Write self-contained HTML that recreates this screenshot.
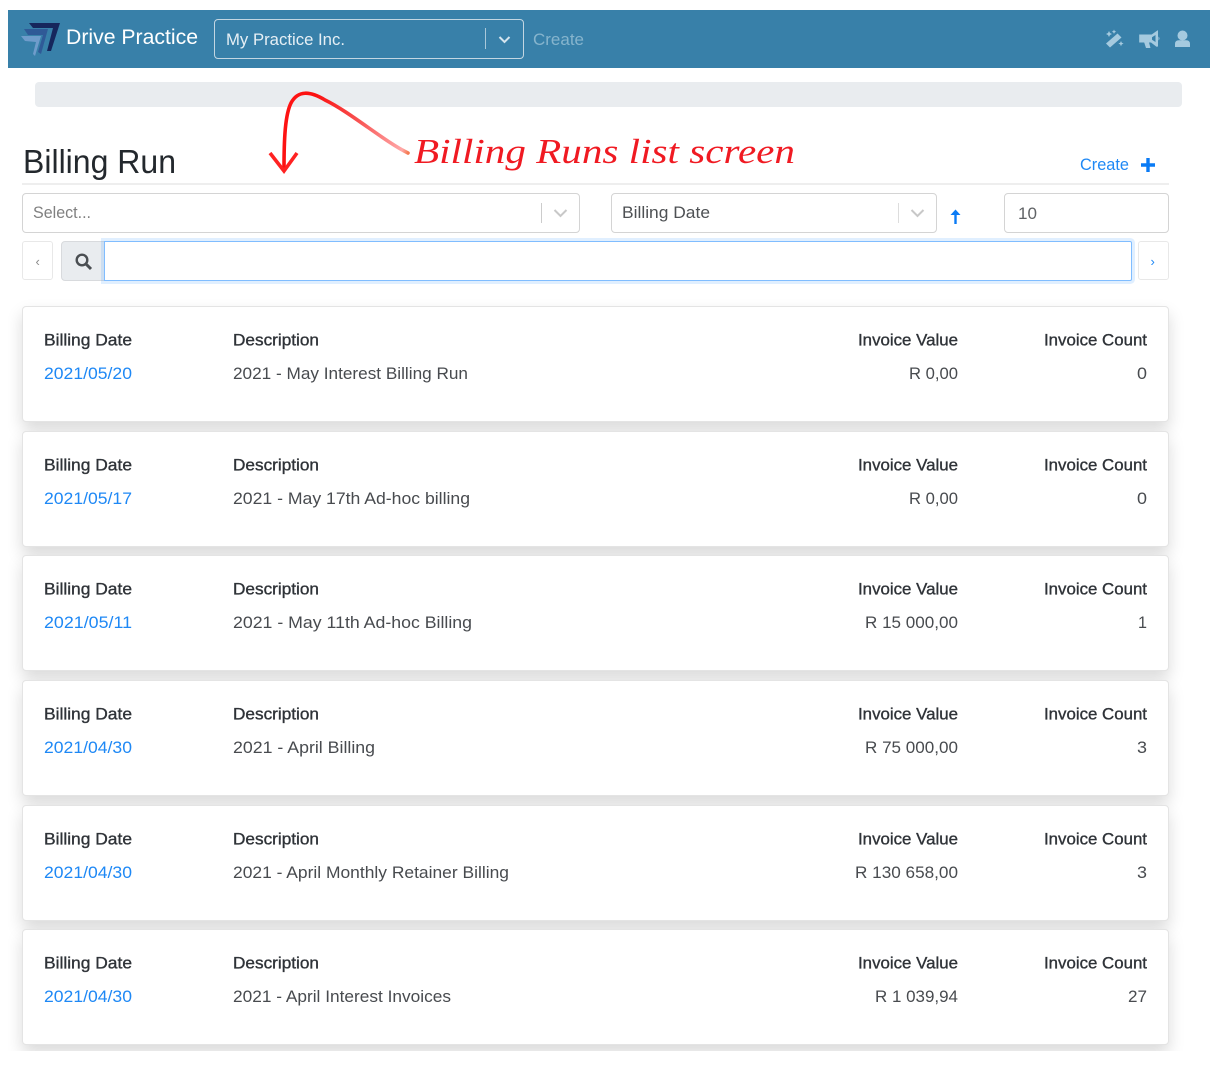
<!DOCTYPE html>
<html><head><meta charset="utf-8"><title>Billing Run</title>
<style>
html,body{margin:0;padding:0;background:#fff;width:1225px;height:1067px;overflow:hidden}
.a{position:absolute;box-sizing:border-box}
#clip{left:8px;top:10px;width:1202px;height:1041px;overflow:hidden}
.card{position:absolute;box-sizing:border-box;left:14px;width:1147px;height:116px;background:#fff;border:1px solid #e4e4e4;border-radius:4px;box-shadow:0 8px 16px rgba(0,0,0,.15)}
.box{background:#fff;border:1px solid #d4d4d4;border-radius:4px}
svg{position:absolute;left:0;top:0}
text{font-family:"Liberation Sans",sans-serif}
.h{font-size:16.5px;fill:#2f3338;stroke:#2f3338;stroke-width:.35px}
.v{font-size:16.5px;fill:#484b4f}
.l{font-size:16.5px;fill:#1e88f5}
</style></head><body>
<div id="clip" class="a">
<div class="a" style="left:0;top:0;width:1202px;height:58px;background:#3880a9"></div>
<div class="a" style="left:206px;top:9px;width:310px;height:40px;border:1px solid #c3d6e2;border-radius:4px"></div>
<div class="a" style="left:477px;top:18px;width:1px;height:21px;background:#a9c8da"></div>
<div class="a" style="left:27px;top:72px;width:1147px;height:25px;background:#e9ecef;border-radius:4px"></div>
<div class="a" style="left:14px;top:173px;width:1147px;height:2px;background:#eeeeee"></div>
<div class="a box" style="left:14px;top:183px;width:558px;height:40px"></div>
<div class="a" style="left:533px;top:193px;width:1px;height:20px;background:#cccccc"></div>
<div class="a box" style="left:603px;top:183px;width:326px;height:40px"></div>
<div class="a" style="left:890px;top:193px;width:1px;height:20px;background:#dddddd"></div>
<div class="a box" style="left:996px;top:183px;width:165px;height:40px"></div>
<div class="a" style="left:14px;top:231px;width:31px;height:39px;border:1px solid #e8e8e8;border-radius:3px"></div>
<div class="a" style="left:53px;top:231px;width:44px;height:40px;background:#e9ecef;border:1px solid #d8dadd;border-radius:4px 0 0 4px"></div>
<div class="a" style="left:96px;top:231px;width:1028px;height:40px;background:#fff;border:1px solid #80bdff;box-shadow:0 0 0 3px rgba(0,123,255,.12);border-radius:0 2px 2px 0"></div>
<div class="a" style="left:1130px;top:231px;width:31px;height:39px;border:1px solid #e8e8e8;border-radius:3px"></div>
<div class="card" style="top:296px"></div>
<div class="card" style="top:421px"></div>
<div class="card" style="top:545px"></div>
<div class="card" style="top:670px"></div>
<div class="card" style="top:795px"></div>
<div class="card" style="top:919px"></div>
</div>
<svg width="1225" height="1067" viewBox="0 0 1225 1067" xmlns="http://www.w3.org/2000/svg">
<defs><linearGradient id="g" gradientUnits="userSpaceOnUse" x1="408" y1="153" x2="283" y2="110">
<stop offset="0" stop-color="#f47a50"/><stop offset=".05" stop-color="#ffa8a8"/><stop offset=".45" stop-color="#f8504f"/><stop offset=".8" stop-color="#fb1010"/><stop offset="1" stop-color="#ff1414"/></linearGradient></defs>

<polygon points="29,23 60,23 51,51 47,51 53,28 33,28" fill="#16265c"/>
<polygon points="24,29 48,29 41,54 38,52 43,35 28,35" fill="#2f5a97"/>
<polygon points="21,36 41,36 35,56 33,54 36,42 25,41" fill="#6f9ccb"/>
<text x="66" y="44" font-size="21.5" fill="#fff" textLength="132" lengthAdjust="spacingAndGlyphs">Drive Practice</text>
<text x="226" y="45" font-size="17" fill="#e6eff5" textLength="119" lengthAdjust="spacingAndGlyphs">My Practice Inc.</text>
<path d="M499.5 37l5 5 5-5" fill="none" stroke="#d5e4ee" stroke-width="2"/>
<text x="533" y="45" font-size="17" fill="#86b4cd" textLength="51" lengthAdjust="spacingAndGlyphs">Create</text>

<g fill="#a5cadf">
<path d="M1117.5 33.5l4 4-11.5 10-4-4z"/>
<path d="M1109 31l1 2 2 1-2 1-1 2-1-2-2-1 2-1zM1114 29.500l.7 1.500 1.500.700-1.500.700-.7 1.500-.7-1.500-1.500-.7 1.500-.7zM1121 41l.8 1.800 1.800.800-1.800.800-.8 1.800-.8-1.800-1.800-.8 1.800-.8z"/>
<path d="M1158 30.500v16l-1.500.3-5.500-4.300h-2l1.500 5.500h-4.500l-1.800-5.500h-5v-8h12.500l6-4.300zM1155.500 35l-3.500 2.300v2.500l3.500 2.200z" fill-rule="evenodd"/>
<path d="M1158.500 36.500q2 2 0 4z"/>
<circle cx="1182.500" cy="35.500" r="5"/>
<path d="M1175 47v-3q0-3.800 3.800-3.800h7.400q3.800 0 3.800 3.800v3z"/>
</g>

<path d="M408 153C385 142 350 112 325 100C310 91 298 90 291 103C285 115 284 140 284 169" fill="none" stroke="url(#g)" stroke-width="3.600" stroke-linecap="round"/>
<path d="M270 153L284 171L297 153" fill="none" stroke="#ff2222" stroke-width="3.600"/>
<text x="414" y="163" font-size="35" fill="#f01a22" style='font-family:"Liberation Serif",serif;font-style:italic' textLength="381" lengthAdjust="spacingAndGlyphs">Billing Runs list screen</text>

<text x="23" y="173" font-size="33" fill="#23282d" textLength="153" lengthAdjust="spacingAndGlyphs">Billing Run</text>
<text x="1080" y="170" font-size="16.500" fill="#1e88f5" textLength="49" lengthAdjust="spacingAndGlyphs">Create</text>
<path d="M1148 158v14M1141 165h14" stroke="#0a7bf5" stroke-width="3.400" fill="none"/>

<text x="33" y="218" font-size="16.500" fill="#808080" textLength="58" lengthAdjust="spacingAndGlyphs">Select...</text>
<path d="M554.500 210l6 6 6-6" fill="none" stroke="#c8c8c8" stroke-width="2"/>
<text x="622" y="218" font-size="16.500" fill="#4e5154" textLength="88" lengthAdjust="spacingAndGlyphs">Billing Date</text>
<path d="M911.500 210l6 6 6-6" fill="none" stroke="#c8c8c8" stroke-width="2"/>
<path d="M955.500 224v-12" stroke="#0a7bf5" stroke-width="2.400" fill="none"/><path d="M950.500 215l5-5.500 5 5.500z" fill="#0a7bf5"/>
<text x="1018" y="219" font-size="16.500" fill="#606366" textLength="19" lengthAdjust="spacingAndGlyphs">10</text>
<text x="35.500" y="266" font-size="13" fill="#8a8a8a">‹</text>
<text x="1150.500" y="266" font-size="13" fill="#1e88f5">›</text>
<circle cx="82" cy="260" r="5.300" fill="none" stroke="#4a4e52" stroke-width="2.400"/>
<path d="M86 264l5 5" stroke="#4a4e52" stroke-width="3" fill="none"/>

<text class="h" x="44" y="345.500" textLength="88" lengthAdjust="spacingAndGlyphs">Billing Date</text>
<text class="h" x="233" y="345.500" textLength="86" lengthAdjust="spacingAndGlyphs">Description</text>
<text class="h" x="858" y="345.500" textLength="100" lengthAdjust="spacingAndGlyphs">Invoice Value</text>
<text class="h" x="1044" y="345.500" textLength="103" lengthAdjust="spacingAndGlyphs">Invoice Count</text>
<text class="l" x="44" y="379" textLength="88" lengthAdjust="spacingAndGlyphs">2021/05/20</text>
<text class="v" x="233" y="379" textLength="235" lengthAdjust="spacingAndGlyphs">2021 - May Interest Billing Run</text>
<text class="v" x="909" y="379" textLength="49" lengthAdjust="spacingAndGlyphs">R 0,00</text>
<text class="v" x="1137" y="379" textLength="10" lengthAdjust="spacingAndGlyphs">0</text>

<text class="h" x="44" y="470.500" textLength="88" lengthAdjust="spacingAndGlyphs">Billing Date</text>
<text class="h" x="233" y="470.500" textLength="86" lengthAdjust="spacingAndGlyphs">Description</text>
<text class="h" x="858" y="470.500" textLength="100" lengthAdjust="spacingAndGlyphs">Invoice Value</text>
<text class="h" x="1044" y="470.500" textLength="103" lengthAdjust="spacingAndGlyphs">Invoice Count</text>
<text class="l" x="44" y="504" textLength="88" lengthAdjust="spacingAndGlyphs">2021/05/17</text>
<text class="v" x="233" y="504" textLength="237" lengthAdjust="spacingAndGlyphs">2021 - May 17th Ad-hoc billing</text>
<text class="v" x="909" y="504" textLength="49" lengthAdjust="spacingAndGlyphs">R 0,00</text>
<text class="v" x="1137" y="504" textLength="10" lengthAdjust="spacingAndGlyphs">0</text>

<text class="h" x="44" y="594.500" textLength="88" lengthAdjust="spacingAndGlyphs">Billing Date</text>
<text class="h" x="233" y="594.500" textLength="86" lengthAdjust="spacingAndGlyphs">Description</text>
<text class="h" x="858" y="594.500" textLength="100" lengthAdjust="spacingAndGlyphs">Invoice Value</text>
<text class="h" x="1044" y="594.500" textLength="103" lengthAdjust="spacingAndGlyphs">Invoice Count</text>
<text class="l" x="44" y="628" textLength="88" lengthAdjust="spacingAndGlyphs">2021/05/11</text>
<text class="v" x="233" y="628" textLength="239" lengthAdjust="spacingAndGlyphs">2021 - May 11th Ad-hoc Billing</text>
<text class="v" x="865" y="628" textLength="93" lengthAdjust="spacingAndGlyphs">R 15 000,00</text>
<text class="v" x="1138" y="628" textLength="9" lengthAdjust="spacingAndGlyphs">1</text>

<text class="h" x="44" y="719.500" textLength="88" lengthAdjust="spacingAndGlyphs">Billing Date</text>
<text class="h" x="233" y="719.500" textLength="86" lengthAdjust="spacingAndGlyphs">Description</text>
<text class="h" x="858" y="719.500" textLength="100" lengthAdjust="spacingAndGlyphs">Invoice Value</text>
<text class="h" x="1044" y="719.500" textLength="103" lengthAdjust="spacingAndGlyphs">Invoice Count</text>
<text class="l" x="44" y="753" textLength="88" lengthAdjust="spacingAndGlyphs">2021/04/30</text>
<text class="v" x="233" y="753" textLength="142" lengthAdjust="spacingAndGlyphs">2021 - April Billing</text>
<text class="v" x="865" y="753" textLength="93" lengthAdjust="spacingAndGlyphs">R 75 000,00</text>
<text class="v" x="1137" y="753" textLength="10" lengthAdjust="spacingAndGlyphs">3</text>

<text class="h" x="44" y="844.500" textLength="88" lengthAdjust="spacingAndGlyphs">Billing Date</text>
<text class="h" x="233" y="844.500" textLength="86" lengthAdjust="spacingAndGlyphs">Description</text>
<text class="h" x="858" y="844.500" textLength="100" lengthAdjust="spacingAndGlyphs">Invoice Value</text>
<text class="h" x="1044" y="844.500" textLength="103" lengthAdjust="spacingAndGlyphs">Invoice Count</text>
<text class="l" x="44" y="878" textLength="88" lengthAdjust="spacingAndGlyphs">2021/04/30</text>
<text class="v" x="233" y="878" textLength="276" lengthAdjust="spacingAndGlyphs">2021 - April Monthly Retainer Billing</text>
<text class="v" x="855" y="878" textLength="103" lengthAdjust="spacingAndGlyphs">R 130 658,00</text>
<text class="v" x="1137" y="878" textLength="10" lengthAdjust="spacingAndGlyphs">3</text>

<text class="h" x="44" y="968.500" textLength="88" lengthAdjust="spacingAndGlyphs">Billing Date</text>
<text class="h" x="233" y="968.500" textLength="86" lengthAdjust="spacingAndGlyphs">Description</text>
<text class="h" x="858" y="968.500" textLength="100" lengthAdjust="spacingAndGlyphs">Invoice Value</text>
<text class="h" x="1044" y="968.500" textLength="103" lengthAdjust="spacingAndGlyphs">Invoice Count</text>
<text class="l" x="44" y="1002" textLength="88" lengthAdjust="spacingAndGlyphs">2021/04/30</text>
<text class="v" x="233" y="1002" textLength="218" lengthAdjust="spacingAndGlyphs">2021 - April Interest Invoices</text>
<text class="v" x="875" y="1002" textLength="83" lengthAdjust="spacingAndGlyphs">R 1 039,94</text>
<text class="v" x="1128" y="1002" textLength="19" lengthAdjust="spacingAndGlyphs">27</text>
</svg>
</body></html>
